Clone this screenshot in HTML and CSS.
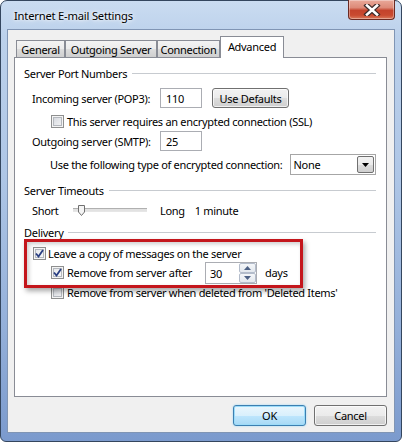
FILE: index.html
```html
<!DOCTYPE html>
<html>
<head>
<meta charset="utf-8">
<link rel="stylesheet" href="styles.css">
</head>
<body>
<div class="window">
  <div class="titlebar">
    <span class="title">Internet E-mail Settings</span>
    <div class="close">
      <svg width="20" height="12" viewBox="0 0 20 12">
        <path d="M5 1.5 L15 10.5 M15 1.5 L5 10.5" stroke="#3b2a2a" stroke-width="5" stroke-linecap="square" fill="none"/>
        <path d="M5 1.5 L15 10.5 M15 1.5 L5 10.5" stroke="#ffffff" stroke-width="2.6" stroke-linecap="square" fill="none"/>
      </svg>
    </div>
  </div>
  <div class="client">
    <div class="tabs">
      <div class="tab t-general">General</div>
      <div class="tab t-outgoing">Outgoing Server</div>
      <div class="tab t-connection">Connection</div>
      <div class="tab t-advanced active">Advanced</div>
    </div>
    <div class="panel">
      <div class="group-head"><span>Server Port Numbers</span><i class="rule"></i></div>
      <div class="row r-incoming">
        <span class="lbl lbl-port">Incoming server (POP3):</span>
        <span class="input port">110</span>
        <span class="btn defaults">Use Defaults</span>
      </div>
      <div class="row r-ssl">
        <span class="cb"></span><span>This server requires an encrypted connection (SSL)</span>
      </div>
      <div class="row r-outgoing">
        <span class="lbl lbl-port">Outgoing server (SMTP):</span>
        <span class="input port">25</span>
      </div>
      <div class="row r-encrypt">
        <span class="lbl lbl-enc">Use the following type of encrypted connection:</span>
        <span class="select"><span class="sel-text">None</span><span class="sel-btn"><svg width="7" height="4" viewBox="0 0 7 4"><path d="M0 0 H7 L3.5 4 Z" fill="#000"/></svg></span></span>
      </div>
      <div class="group-head g-timeouts"><span>Server Timeouts</span><i class="rule"></i></div>
      <div class="row r-slider">
        <span class="lbl lbl-short">Short</span>
        <span class="slider"><span class="track"></span><span class="thumb"><svg width="7" height="11" viewBox="0 0 7 11"><path d="M0.5 0.5 H6.5 V7 L3.5 10.5 L0.5 7 Z" fill="#f4f4f4" stroke="#707070"/></svg></span></span>
        <span class="long">Long</span>
        <span>1 minute</span>
      </div>
      <div class="group-head g-delivery"><span>Delivery</span><i class="rule"></i></div>
      <div class="row r-leave">
        <span class="cb checked"><svg width="9" height="9" viewBox="0 0 9 9"><path d="M1 4.5 L3.5 7.5 L8 1" stroke="#2a3f82" stroke-width="1.8" fill="none"/></svg></span><span>Leave a copy of messages on the server</span>
      </div>
      <div class="row r-remove">
        <span class="cb checked"><svg width="9" height="9" viewBox="0 0 9 9"><path d="M1 4.5 L3.5 7.5 L8 1" stroke="#2a3f82" stroke-width="1.8" fill="none"/></svg></span><span class="lbl lbl-remove">Remove from server after</span>
        <span class="spin"><span class="spin-text">30</span><span class="spin-btns"><span class="sb"><svg width="7" height="4" viewBox="0 0 7 4"><path d="M0 4 H7 L3.5 0 Z" fill="#4d6185"/></svg></span><span class="sb"><svg width="7" height="4" viewBox="0 0 7 4"><path d="M0 0 H7 L3.5 4 Z" fill="#4d6185"/></svg></span></span></span>
        <span class="days">days</span>
      </div>
      <div class="row r-deleted">
        <span class="cb"></span><span>Remove from server when deleted from 'Deleted Items'</span>
      </div>
      <div class="highlight"></div>
    </div>
    <div class="buttons">
      <span class="btn ok">OK</span>
      <span class="btn">Cancel</span>
    </div>
  </div>
</div>
</body>
</html>
```

FILE: styles.css
```css
* { box-sizing: border-box; }
html, body { margin: 0; padding: 0; }
body {
  width: 402px;
  height: 442px;
  background: #ffffff;
  font-family: "Noto Sans", "Open Sans", sans-serif;
  font-size: 11px;
  letter-spacing: -0.3px;
  color: #000;
  overflow: hidden;
}
.window {
  width: 402px;
  height: 442px;
  border: 1px solid #34465e;
  border-radius: 7px 7px 6px 6px;
  background: linear-gradient(180deg, #cadcf1 0%, #bcd1eb 8%, #aec6e6 40%, #93afd9 75%, #7b9acd 100%);
  padding: 0 6px 8px 6px;
  display: flex;
  flex-direction: column;
}
.titlebar {
  height: 28px;
  display: flex;
  align-items: center;
  justify-content: space-between;
  padding-left: 7px;
}
.title {
  font-size: 11.2px;
  letter-spacing: -0.2px;
  color: #000;
  text-shadow: 0 0 6px #ffffff, 0 0 3px #ffffff;
}
.close {
  align-self: flex-start;
  margin-top: -1px;
  width: 47px;
  height: 20px;
  border: 1px solid #6b2a22;
  border-top: none;
  border-radius: 0 0 4px 4px;
  background: linear-gradient(180deg, #e9a99a 0%, #dd8a78 40%, #c4432c 55%, #c94a30 80%, #d97a5c 100%);
  box-shadow: inset 0 0 0 1px rgba(255,255,255,0.35);
  display: flex;
  align-items: center;
  justify-content: center;
}
.client {
  flex: 1;
  border: 1px solid #8095b4;
  background: #f0f0f0;
  padding: 0 0 0 6px;
  display: flex;
  flex-direction: column;
}
.tabs {
  height: 27px;
  display: flex;
  align-items: flex-end;
  padding-left: 2px;
}
.tab {
  height: 17px;
  border: 1px solid #898c95;
  border-bottom: none;
  background: linear-gradient(180deg, #f3f3f3 0%, #ebebeb 50%, #dddddd 51%, #cfcfcf 100%);
  display: flex;
  align-items: center;
  justify-content: center;
  white-space: nowrap;
  padding-top: 1px;
}
.t-general { width: 49px; }
.t-outgoing { width: 92px; }
.t-connection { width: 63px; }
.tab.active {
  width: 64px;
  height: 22px;
  margin-bottom: -1px;
  background: #ffffff;
  position: relative;
  z-index: 1;
  padding-top: 0;
  padding-bottom: 3px;
}
.panel {
  width: 373px;
  height: 340px;
  border: 1px solid #898c95;
  background: #ffffff;
  padding: 7px 10px 0 9px;
  display: flex;
  flex-direction: column;
  position: relative;
}
.group-head {
  height: 16px;
  display: flex;
  align-items: center;
  white-space: nowrap;
}
.rule {
  flex: 1;
  height: 1px;
  background: #c7cbd0;
  margin-left: 5px;
}
.g-timeouts { margin-top: 7px; }
.g-delivery { margin-top: 6px; }
.row {
  display: flex;
  align-items: center;
  white-space: nowrap;
}
.lbl { display: inline-block; }
.r-incoming { height: 20px; margin-top: 7px; padding-left: 8px; }
.lbl-port { width: 128px; }
.input {
  height: 20px;
  border: 1px solid #abadb3;
  background: #fff;
  padding-left: 5px;
  display: flex;
  align-items: center;
}
.port { width: 42px; }
.btn {
  height: 21px;
  border: 1px solid #707070;
  border-radius: 3px;
  background: linear-gradient(180deg, #f2f2f2 0%, #ebebeb 50%, #dddddd 51%, #cfcfcf 100%);
  box-shadow: inset 0 0 0 1px rgba(255,255,255,0.7);
  display: flex;
  align-items: center;
  justify-content: center;
}
.defaults { width: 77px; height: 20px; margin-left: 10px; }
.r-ssl { height: 16px; margin-top: 5px; padding-left: 27px; }
.cb {
  width: 13px;
  height: 13px;
  border: 1px solid #8e8f8f;
  background: linear-gradient(135deg, #cfd2d8 0%, #e4e6ea 50%, #f6f6f6 100%);
  box-shadow: inset 0 0 0 1px #f4f4f4, inset 0 0 0 2px #b4b8be;
  margin-right: 3px;
  flex: none;
  display: flex;
  align-items: center;
  justify-content: center;
}
.cb.checked {
  background: linear-gradient(135deg, #e1e3e6 0%, #f0f1f2 50%, #fbfbfb 100%);
}
.r-outgoing { height: 20px; margin-top: 2px; padding-left: 8px; }
.r-encrypt { height: 21px; margin-top: 3px; padding-left: 26px; }
.lbl-enc { width: 241px; }
.select {
  width: 87px;
  height: 21px;
  border: 1px solid #a6a6a6;
  background: #fff;
  display: flex;
  align-items: center;
  justify-content: space-between;
  padding: 0 1px 0 3px;
}
.sel-btn {
  width: 17px;
  height: 17px;
  border: 1px solid #707070;
  border-radius: 2px;
  background: linear-gradient(180deg, #f2f2f2 0%, #ebebeb 50%, #dddddd 51%, #cfcfcf 100%);
  display: flex;
  align-items: center;
  justify-content: center;
}
.r-slider { height: 16px; margin-top: 4px; padding-left: 8px; }
.lbl-short { width: 41px; }
.slider {
  width: 74px;
  height: 12px;
  display: flex;
  align-items: center;
  position: relative;
  margin-right: 13px;
}
.track {
  width: 100%;
  height: 4px;
  border-top: 1px solid #b0b0b0;
  border-bottom: 1px solid #e6e6e6;
  background: #e2e2e2;
}
.thumb {
  position: absolute;
  left: 5px;
  top: 1px;
  display: flex;
}
.long { margin-right: 10px; }
.r-leave { height: 16px; margin-top: 5px; padding-left: 9px; }
.r-leave .cb { margin-right: 2px; }
.r-remove { height: 21px; margin-top: 1px; padding-left: 27px; }
.lbl-remove { width: 138px; }
.spin {
  width: 52px;
  height: 22px;
  border: 1px solid #abadb3;
  background: #fff;
  display: flex;
  align-items: center;
  justify-content: space-between;
  padding-left: 4px;
}
.spin-text { padding-top: 2px; }
.spin-btns {
  width: 17px;
  height: 20px;
  display: flex;
  flex-direction: column;
}
.sb {
  flex: 1;
  border: 1px solid #b3bccb;
  border-radius: 2px;
  background: linear-gradient(180deg, #f4f6f9 0%, #e3e8ee 100%);
  display: flex;
  align-items: center;
  justify-content: center;
}
.days { margin-left: 8px; }
.r-deleted { height: 16px; margin-top: 1px; padding-left: 27px; }
.highlight {
  position: absolute;
  left: 9px;
  top: 181px;
  width: 279px;
  height: 49px;
  border: 3px solid #c4161c;
  box-shadow: 2px 3px 5px rgba(0,0,0,0.35), inset 2px 2px 4px rgba(0,0,0,0.2);
}
.buttons {
  display: flex;
  justify-content: flex-end;
  gap: 8px;
  width: 373px;
  margin-top: 8px;
}
.buttons .btn { width: 73px; }
.btn.ok {
  border-color: #3c7fb1;
  background: linear-gradient(180deg, #eaf6fd 0%, #d9f0fc 50%, #bee6fd 51%, #a7d9f5 100%);
  box-shadow: inset 0 0 0 1px #9cdcf9, 0 0 2px #8ed4f6;
}
```
